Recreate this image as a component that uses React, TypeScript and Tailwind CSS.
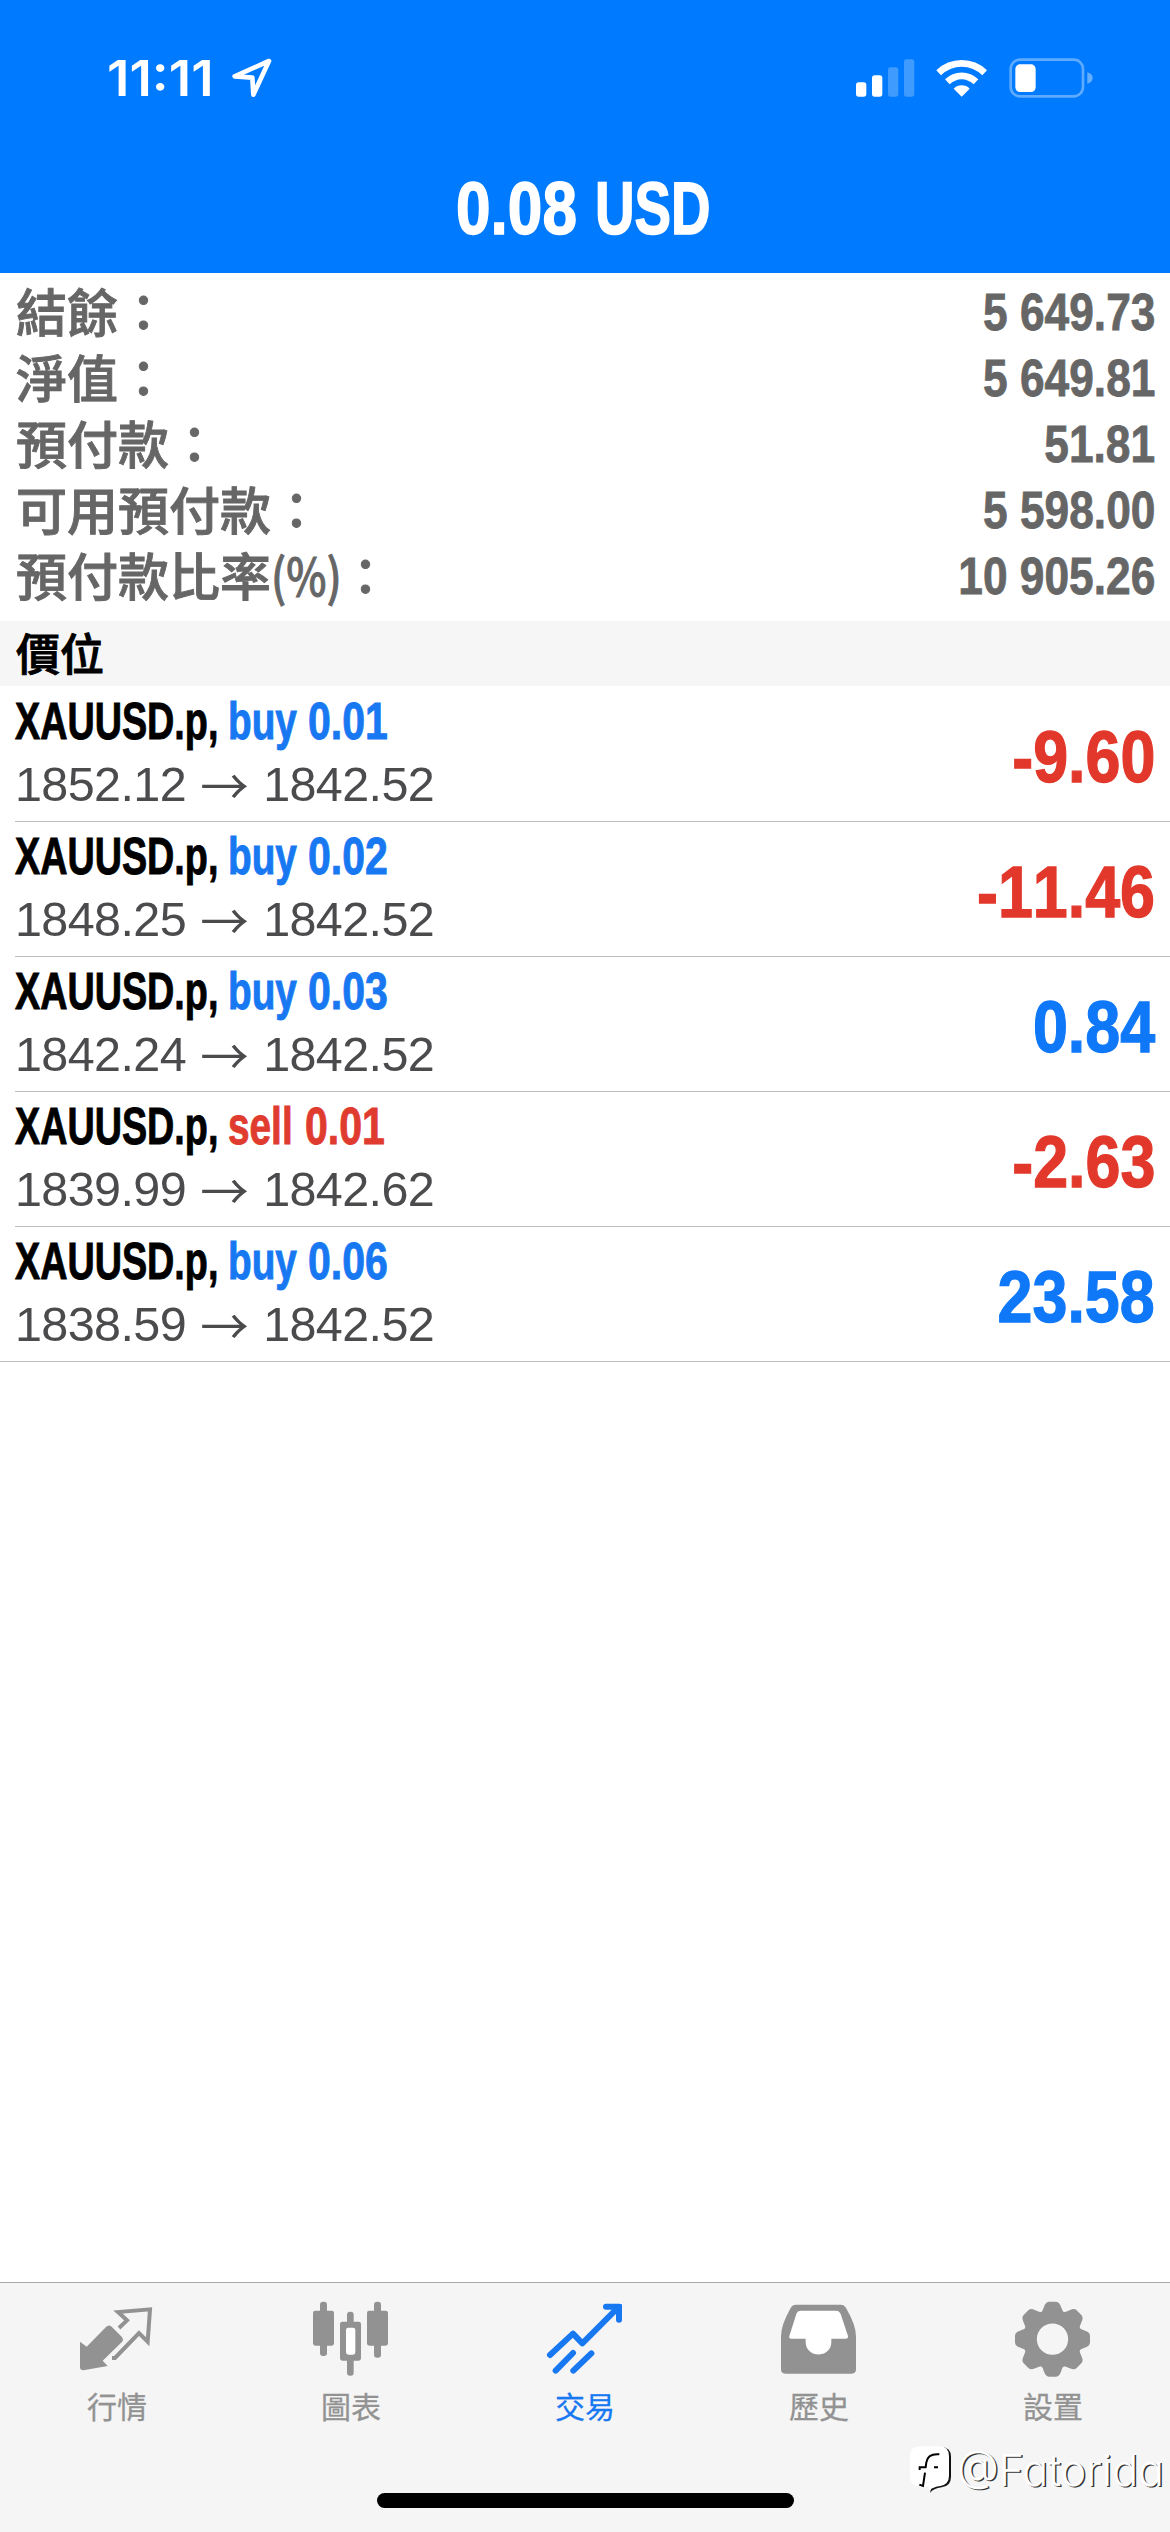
import React from "react";

const summary = [
  ["結餘", "", "5 649.73"],
  ["淨值", "", "5 649.81"],
  ["預付款", "", "51.81"],
  ["可用預付款", "", "5 598.00"],
  ["預付款比率", "(%)", "10 905.26"],
];

const positions = [
  { side: "buy", volume: "0.01", open: "1852.12", now: "1842.52", profit: "-9.60" },
  { side: "buy", volume: "0.02", open: "1848.25", now: "1842.52", profit: "-11.46" },
  { side: "buy", volume: "0.03", open: "1842.24", now: "1842.52", profit: "0.84" },
  { side: "sell", volume: "0.01", open: "1839.99", now: "1842.62", profit: "-2.63" },
  { side: "buy", volume: "0.06", open: "1838.59", now: "1842.52", profit: "23.58" },
];

function StatusBar() {
  return (
    <div className="flex h-[156px] items-center justify-between pl-[107px] pr-[77px]">
      <div className="flex items-center gap-[17px]">
        <span className="w-[107px] whitespace-nowrap font-['Inter',sans-serif] text-[50px] font-semibold leading-[60px]">
          <span className="inline-block origin-left scale-x-[1.06]">11:11</span>
        </span>
        <svg className="h-[42px] w-[42px]" viewBox="450 82 126 126" fill="none" stroke="currentColor" strokeWidth="14" strokeLinejoin="round">
          <path d="M564 94 461 140 514 144 517 195Z" />
        </svg>
      </div>
      <svg className="h-[40px] w-[237px]" viewBox="107 82 711 120">
        <g fill="#fff">
          <rect x="107" y="155" width="31" height="43" rx="8" />
          <rect x="155" y="134" width="31" height="64" rx="8" />
          <rect x="203" y="110" width="31" height="88" rx="8" opacity=".25" />
          <rect x="251" y="86" width="31" height="112" rx="8" opacity=".25" />
          <path d="M348 119 A108 108 0 0 1 500 119 L486 134 A88 88 0 0 0 362 134Z" />
          <path d="M374 146 A71 71 0 0 1 474 146 L460 161 A51 51 0 0 0 388 161Z" />
          <path d="M400 174 A34 34 0 0 1 448 174 L424 198Z" />
          <rect x="585" y="101" width="61" height="83" rx="14" />
          <path d="M801 125 Q817 130 817 142 Q817 154 801 159Z" opacity=".4" />
        </g>
        <rect x="571" y="87" width="217" height="110" rx="28" fill="none" stroke="#fff" strokeWidth="8" opacity=".37" />
      </svg>
    </div>
  );
}

function TabIcon({ name }: { name: string }) {
  const box = "h-[80px] w-[80px]";
  if (name === "quotes")
    return (
      <svg className={box} viewBox="231 115 240 240" fill="currentColor">
        <path d="M240 246 260 261 318 202Q326 193 335 201L365 231Q373 240 365 248L308 303 323 319 250 332Q240 332 240 322Z" />
        <path d="M357 205 381 182 354 157 450 149 443 246 417 220 345 295H336" fill="none" stroke="currentColor" strokeWidth="12" />
      </svg>
    );
  if (name === "charts")
    return (
      <svg className={box} viewBox="933 115 240 240" fill="currentColor">
        <rect x="960" y="126" width="21" height="163" rx="9" />
        <rect x="939" y="153" width="63" height="105" rx="7" />
        <rect x="1122" y="126" width="21" height="168" rx="9" />
        <rect x="1101" y="153" width="63" height="105" rx="7" />
        <rect x="1041" y="156" width="20" height="40" rx="9" />
        <rect x="1041" y="295" width="20" height="53" rx="9" />
        <rect x="1036" y="202" width="31" height="85" fill="#fff" />
        <path fillRule="evenodd" d="M1027 186H1076Q1083 186 1083 193V296Q1083 303 1076 303H1027Q1020 303 1020 296V193Q1020 186 1027 186ZM1045 204Q1038 204 1038 211V278Q1038 285 1045 285H1059Q1066 285 1066 278V211Q1066 204 1059 204Z" />
      </svg>
    );
  if (name === "trade")
    return (
      <svg className={box} viewBox="135 115 240 240" fill="none" stroke="currentColor" strokeWidth="18" strokeLinecap="round" strokeLinejoin="round">
        <path d="M150 286 219 222 247 251 351 147" />
        <path d="M318 141H357V180" />
        <path d="M219 280 167 333M274 281 220 333" />
        <path d="M347 137H362V158Z" strokeWidth="8" fill="currentColor" />
      </svg>
    );
  if (name === "history")
    return (
      <svg className={box} viewBox="837 115 240 240" fill="currentColor">
        <path d="M888 135H1022Q1033 135 1038 145Q1068 196 1068 230V329Q1068 342 1055 342H856Q843 342 843 329V230Q843 196 872 145Q877 135 888 135Z" />
        <path fill="#fff" d="M903 153H1008Q1018 153 1022 163L1044 229Q1045 237 1037 237H994V247C994 297 917 297 917 247V237H874Q866 237 868 229L889 163Q892 153 903 153Z" />
      </svg>
    );
  return (
    <svg className={box} viewBox="399 115 240 240" fill="currentColor">
      <g transform="translate(517.5 238.5)">
        {[0, 45, 90, 135, 180, 225, 270, 315].map((a) => (
          <path key={a} transform={`rotate(${a})`} d="M-36 -79 Q-30 -83 -26 -96 L-22 -105 Q-18 -112 -11 -112.500 H11 Q18 -112 22 -105 L26 -96 Q30 -83 36 -79 L20 -50 H-20Z" />
        ))}
        <circle r="67" fill="none" stroke="currentColor" strokeWidth="40" />
      </g>
    </svg>
  );
}

const tabs = [
  ["quotes", "行情"],
  ["charts", "圖表"],
  ["trade", "交易"],
  ["history", "歷史"],
  ["settings", "設置"],
];

export default function App() {
  return (
    <div className="relative flex h-[2532px] w-[1170px] flex-col overflow-hidden bg-white font-['Liberation_Sans','Noto_Sans_CJK_TC',sans-serif]">
      <header className="h-[273px] shrink-0 bg-[#007aff] text-white">
        <StatusBar />
        <h1 className="flex h-[104px] items-center whitespace-nowrap pl-[456px] pt-[2px] text-[74px] font-bold leading-none [-webkit-text-stroke:1.5px_currentColor]">
          <span className="w-[139px]">
            <span className="inline-block origin-left scale-x-[0.84]">0.08</span>
          </span>
          <span className="inline-block origin-left scale-x-[0.74]">USD</span>
        </h1>
      </header>

      <section className="flex h-[348px] shrink-0 flex-col pt-[6px] text-[#666]">
        {summary.map(([label, unit, value]) => (
          <div key={label} className="flex h-[66px] items-center justify-between pl-4 pr-[15px]">
            <span className="-mt-[5px] flex whitespace-nowrap font-['Noto_Sans_CJK_TC',sans-serif] text-[51px] font-medium leading-[66px] [-webkit-text-stroke:0.9px_currentColor]">
              {label}
              {unit && (
                <span className="w-[69px]">
                  <span className="inline-block origin-left scale-x-[0.84]">{unit}</span>
                </span>
              )}
              ：
            </span>
            <span className="origin-right scale-x-[0.852] whitespace-nowrap text-[52px] font-bold leading-[66px] [-webkit-text-stroke:0.8px_currentColor]">{value}</span>
          </div>
        ))}
      </section>

      <div className="flex h-[65px] shrink-0 items-center bg-[#f6f6f6] pb-[2px] pl-4 font-['Noto_Sans_CJK_TC',sans-serif] text-[44px] font-medium leading-[63px] text-black [-webkit-text-stroke:0.9px_currentColor]">
        價位
      </div>

      <ul>
        {positions.map((p, i) => (
          <li key={i} className="h-[135px]">
            <div className={i === 4 ? "h-[136px] border-b-[1px] border-[#bcbcc0]" : "ml-[15px] h-[136px] border-b-[1px] border-[#bcbcc0]"}>
              <div className={i === 4 ? "flex h-[135px] items-center justify-between pl-[15px] pr-[15px]" : "flex h-[135px] items-center justify-between pr-[15px]"}>
                <div className="flex flex-col pb-[2px]">
                  <div className="flex h-[64px] items-center whitespace-nowrap text-[51px] font-bold leading-[64px] [-webkit-text-stroke:0.9px_currentColor]">
                    <span className="w-[213px] text-black">
                      <span className="inline-block origin-left scale-x-[0.74]">XAUUSD.p,</span>
                    </span>
                    <span className={p.side === "buy" ? "flex text-[#1778f2]" : "flex text-[#e03b2f]"}>
                      <span className={p.side === "buy" ? "w-[80px]" : "w-[77px]"}>
                        <span className="inline-block origin-left scale-x-[0.76]">{p.side}</span>
                      </span>
                      <span className="inline-block origin-left scale-x-[0.805]">{p.volume}</span>
                    </span>
                  </div>
                  <div className="flex h-[61px] items-center whitespace-pre text-[48.5px] leading-[61px] tracking-[-0.6px] text-[#4b4b4d]">
                    <span>{p.open}</span>
                    <span className="w-[77px] text-center font-['Noto_Sans_CJK_TC',sans-serif] font-normal tracking-normal">→</span>
                    <span>{p.now}</span>
                  </div>
                </div>
                <div
                  className={
                    p.profit.startsWith("-")
                      ? "origin-right scale-x-[0.86] pt-[6px] text-[73px] font-bold leading-none text-[#e2382b] [-webkit-text-stroke:1.3px_currentColor] [font-kerning:none]"
                      : "origin-right scale-x-[0.86] pt-[6px] text-[73px] font-bold leading-none text-[#0f78f8] [-webkit-text-stroke:1.3px_currentColor] [font-kerning:none]"
                  }
                >
                  {p.profit}
                </div>
              </div>
            </div>
          </li>
        ))}
      </ul>

      <nav className="mt-auto flex h-[250px] shrink-0 border-t border-[#a9a9ab] bg-[#f5f5f5] pt-[15px]">
        {tabs.map(([name, label]) => (
          <div key={name} className={name === "trade" ? "flex w-[234px] flex-col items-center text-[#1778f2]" : "flex w-[234px] flex-col items-center text-[#929292]"}>
            <TabIcon name={name} />
            <span className="mt-[7px] font-['Noto_Sans_CJK_TC',sans-serif] text-[30px] leading-[40px] [-webkit-text-stroke:0.3px_currentColor]">{label}</span>
          </div>
        ))}
      </nav>

      <div className="absolute bottom-[24px] left-[377px] h-[15px] w-[417px] rounded-full bg-black" />

      <div className="absolute left-[909px] top-[2445px] flex items-center text-white">
        <svg className="h-[50px] w-[44px]" viewBox="87 560 132 150">
          <path d="M120 566H183Q213 566 213 596V655Q213 683 185 687Q160 690 150 704L156 680 200 650V580Z" fill="#111" />
          <path d="M120 564H179Q207 564 207 594V652Q207 678 181 683Q160 686 150 694L146 684H120Q90 684 90 655V594Q90 564 120 564Z" fill="#fff" />
          <path d="M178 588Q143 585 139 612L137 627H119V635M135 643 129 683 118 679M162 627H174" fill="none" stroke="#000" strokeWidth="6" />
        </svg>
        <span className="ml-[4px] whitespace-nowrap font-['Inter',sans-serif] text-[43px] font-light leading-[50px] [font-feature-settings:'cv11'] [text-shadow:1.5px_1px_0_#333]">@Fatorida</span>
      </div>
    </div>
  );
}
